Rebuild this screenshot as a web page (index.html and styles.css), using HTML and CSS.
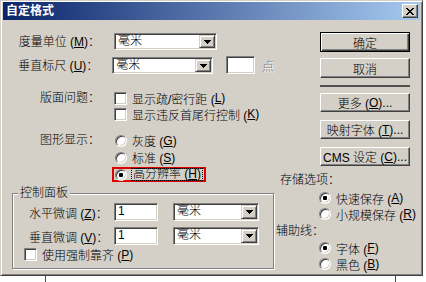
FILE: index.html
```html
<!DOCTYPE html>
<html lang="zh-CN">
<head>
    <meta charset="UTF-8">
    <meta name="viewport" content="width=device-width, initial-scale=1.0">
    <title>自定格式</title>
    <link rel="stylesheet" href="styles.css">
</head>
<body>
    <div class="window">
        <!-- 标题栏 -->
        <div class="caption">
            <span class="caption-title">自定格式</span>
            <span class="caption-close">
                <svg width="8" height="7" viewBox="0 0 8 7" shape-rendering="crispEdges"><path d="M0 0h2v1H0zM6 0h2v1H6zM1 1h2v1H1zM5 1h2v1H5zM2 2h4v1H2zM3 3h2v1H3zM2 4h4v1H2zM1 5h2v1H1zM5 5h2v1H5zM0 6h2v1H0zM6 6h2v1H6z" fill="#000"/></svg>
            </span>
        </div>
        <div class="content">
            <div class="left">
                <div class="field-row">
                    <span class="label">度量单位 (<u>M</u>)：</span>
                    <div class="select"><span class="select-text">毫米</span><span class="drop"><svg width="7" height="4" viewBox="0 0 7 4" shape-rendering="crispEdges"><path d="M0 0h7v1H0zM1 1h5v1H1zM2 2h3v1H2zM3 3h1v1H3z" fill="#000"/></svg></span></div>
                </div>
                <div class="field-row gap7">
                    <span class="label">垂直标尺 (<u>U</u>)：</span>
                    <div class="select"><span class="select-text">毫米</span><span class="drop"><svg width="7" height="4" viewBox="0 0 7 4" shape-rendering="crispEdges"><path d="M0 0h7v1H0zM1 1h5v1H1zM2 2h3v1H2zM3 3h1v1H3z" fill="#000"/></svg></span></div>
                    <div class="textbox small"></div>
                    <span class="disabled">点</span>
                </div>
                <div class="field-row top gap16">
                    <span class="label">版面问题：</span>
                    <div class="options">
                        <div class="check-row"><span class="check"></span>显示疏/密行距 (<u>L</u>)</div>
                        <div class="check-row"><span class="check"></span>显示违反首尾行控制 (<u>K</u>)</div>
                    </div>
                </div>
                <div class="field-row top gap10">
                    <span class="label label-tall">图形显示：</span>
                    <div class="options">
                        <div class="radio-row"><span class="radio"></span>灰度 (<u>G</u>)</div>
                        <div class="radio-row"><span class="radio"></span>标准 (<u>S</u>)</div>
                        <div class="radio-row"><span class="marked"><span class="radio on"></span><span class="focus">高分辨率 (<u>H</u>)</span></span></div>
                    </div>
                </div>
                <!-- 控制面板 -->
                <div class="group">
                    <span class="group-title">控制面板</span>
                    <div class="group-row first">
                        <span class="group-label">水平微调 (<u>Z</u>)：</span>
                        <div class="textbox num">1</div>
                        <div class="select unit"><span class="select-text">毫米</span><span class="drop"><svg width="7" height="4" viewBox="0 0 7 4" shape-rendering="crispEdges"><path d="M0 0h7v1H0zM1 1h5v1H1zM2 2h3v1H2zM3 3h1v1H3z" fill="#000"/></svg></span></div>
                    </div>
                    <div class="group-row">
                        <span class="group-label">垂直微调 (<u>V</u>)：</span>
                        <div class="textbox num">1</div>
                        <div class="select unit"><span class="select-text">毫米</span><span class="drop"><svg width="7" height="4" viewBox="0 0 7 4" shape-rendering="crispEdges"><path d="M0 0h7v1H0zM1 1h5v1H1zM2 2h3v1H2zM3 3h1v1H3z" fill="#000"/></svg></span></div>
                    </div>
                    <div class="snap-row"><span class="check"></span>使用强制靠齐 (<u>P</u>)</div>
                </div>
            </div>
            <div class="right">
                <div class="btn default">确定</div>
                <div class="btn gap6">取消</div>
                <div class="sep"></div>
                <div class="btn small-btn gap6">更多 (<u>O</u>)...</div>
                <div class="btn small-btn gap8">映射字体 (<u>T</u>)...</div>
                <div class="btn small-btn gap8">CMS 设定 (<u>C</u>)...</div>
                <div class="side-title save-title">存储选项：</div>
                <div class="side-options">
                    <div class="radio-row"><span class="radio on"></span>快速保存 (<u>A</u>)</div>
                    <div class="radio-row"><span class="radio"></span>小规模保存 (<u>R</u>)</div>
                </div>
                <div class="side-title guide-title">辅助线：</div>
                <div class="side-options">
                    <div class="radio-row"><span class="radio on"></span>字体 (<u>F</u>)</div>
                    <div class="radio-row"><span class="radio"></span>黑色 (<u>B</u>)</div>
                </div>
            </div>
        </div>
    </div>
    <div class="desk"></div>
</body>
</html>
```

FILE: styles.css
```css
* {
    box-sizing: border-box;
}
body {
    margin: 0;
    background: #fff;
    font-family: "Liberation Sans", "Noto Sans CJK SC", sans-serif;
    font-size: 12px;
    font-weight: 300;
    color: #000;
}
u {
    text-decoration: underline;
}
/* 窗口外框 */
.window {
    width: 423px;
    height: 276px;
    background: #d4d0c8;
    border: 1px solid;
    border-color: #d4d0c8 #404040 #404040 #d4d0c8;
    box-shadow: inset 1px 1px #fff, inset -1px -1px #808080;
    padding: 1px 2px 2px 2px;
    display: flex;
    flex-direction: column;
}
/* 标题栏 */
.caption {
    height: 18px;
    flex: none;
    display: flex;
    align-items: center;
    justify-content: space-between;
    padding: 0 2px 0 3px;
    background: linear-gradient(to right, #0a246a, #a6caf0);
}
.caption-title {
    color: #fff;
    font-weight: bold;
    line-height: 14px;
}
.caption-close {
    width: 16px;
    height: 14px;
    display: flex;
    align-items: center;
    justify-content: center;
    background: #d4d0c8;
    border: 1px solid;
    border-color: #fff #404040 #404040 #fff;
    box-shadow: inset -1px -1px #808080;
    padding-right: 1px;
}
.content {
    flex: 1;
    display: flex;
}
/* 左侧 */
.left {
    width: 262px;
    margin-left: 9px;
    padding-top: 13px;
    display: flex;
    flex-direction: column;
}
.field-row {
    display: flex;
    align-items: center;
    height: 17px;
}
.field-row.top {
    align-items: flex-start;
    height: auto;
}
.gap7 { margin-top: 7px; }
.gap16 { margin-top: 16px; }
.gap10 { margin-top: 10px; }
.gap6 { margin-top: 6px; }
.gap8 { margin-top: 8px; }
.label {
    width: 88px;
    margin-right: 14px;
    text-align: right;
    white-space: nowrap;
    line-height: 16px;
}
.label-tall {
    line-height: 17px;
}
/* 下拉框和文本框 */
.select,
.textbox {
    height: 17px;
    background: #fff;
    border: 1px solid;
    border-color: #808080 #fff #fff #808080;
    box-shadow: inset 1px 1px #404040, inset -1px -1px #d4d0c8;
}
.select {
    width: 103px;
    display: flex;
    padding: 1px;
}
.select-text {
    flex: 1;
    padding-left: 2px;
    line-height: 13px;
}
.drop {
    width: 16px;
    display: flex;
    align-items: center;
    justify-content: center;
    background: #d4d0c8;
    border: 1px solid;
    border-color: #d4d0c8 #404040 #404040 #d4d0c8;
    box-shadow: inset 1px 1px #fff, inset -1px -1px #808080;
}
.textbox {
    padding: 0 3px;
    line-height: 15px;
}
.textbox.small {
    width: 29px;
    height: 18px;
    margin-left: 13px;
    margin-top: -2px;
}
.disabled {
    margin-left: 7px;
    color: #808080;
    text-shadow: 1px 1px #fff;
}
/* 复选框和单选框 */
.options {
    display: flex;
    flex-direction: column;
}
.check-row {
    display: flex;
    align-items: center;
    height: 16px;
    white-space: nowrap;
}
.radio-row {
    display: flex;
    align-items: center;
    height: 17px;
    white-space: nowrap;
}
.check {
    width: 13px;
    height: 13px;
    flex: none;
    background: #fff;
    border: 1px solid;
    border-color: #808080 #fff #fff #808080;
    box-shadow: inset 1px 1px #404040, inset -1px -1px #d4d0c8;
    margin-right: 5px;
}
.radio {
    width: 12px;
    height: 12px;
    flex: none;
    border-radius: 50%;
    background: #fff;
    border: 1px solid;
    border-color: #808080 #fff #fff #808080;
    box-shadow: inset 1px 1px #404040, inset -1px -1px #d4d0c8;
    margin: 0 5px 0 1px;
    display: flex;
    align-items: center;
    justify-content: center;
}
.radio.on::after {
    content: "";
    width: 4px;
    height: 4px;
    border-radius: 1px;
    background: #000;
}
/* 红框标记 */
.marked {
    display: flex;
    align-items: center;
    height: 15px;
    margin-left: -2px;
    padding-right: 1px;
    border: 2px solid #e00000;
}
.focus {
    line-height: 11px;
    border: 1px dotted #000;
    padding: 0 1px;
    margin-left: -1px;
}
/* 控制面板分组 */
.group {
    width: 262px;
    height: 76px;
    margin-top: 10px;
    border: 1px solid #808080;
    box-shadow: 1px 1px 0 #fff, inset 1px 1px 0 #fff;
    display: flex;
    flex-direction: column;
}
.group-title {
    align-self: flex-start;
    margin: -8px 0 0 5px;
    padding: 0 2px;
    background: #d4d0c8;
    line-height: 14px;
}
.group-row {
    display: flex;
    align-items: center;
    height: 18px;
    padding-left: 16px;
    margin-top: 6px;
}
.group-row.first {
    margin-top: 3px;
}
.group-label {
    width: 75px;
    margin-right: 10px;
    white-space: nowrap;
}
.textbox.num {
    width: 44px;
    height: 18px;
    margin-right: 15px;
}
.select.unit {
    width: 86px;
    height: 18px;
}
.snap-row {
    display: flex;
    align-items: center;
    height: 13px;
    margin-top: 3px;
    padding-left: 11px;
}
/* 右侧按钮 */
.right {
    flex: 1;
    padding: 12px 0 0 2px;
    display: flex;
    flex-direction: column;
}
.btn {
    width: 90px;
    height: 20px;
    margin-left: 44px;
    display: flex;
    align-items: center;
    justify-content: center;
    white-space: nowrap;
    background: #d4d0c8;
    border: 1px solid;
    border-color: #fff #404040 #404040 #fff;
    box-shadow: inset -1px -1px #808080;
}
.btn.default {
    border-color: #000;
    box-shadow: inset 1px 1px #fff, inset -1px -1px #404040, inset -2px -2px #808080;
}
.btn.small-btn {
    height: 19px;
}
.sep {
    width: 90px;
    height: 2px;
    margin: 7px 0 0 44px;
    background: #505050;
}
.side-title {
    line-height: 14px;
}
.save-title {
    margin: 7px 0 0 4px;
}
.guide-title {
    margin-top: 2px;
}
.side-options {
    display: flex;
    flex-direction: column;
    padding-left: 42px;
}
.side-options .radio-row {
    height: 16px;
}
.save-title + .side-options {
    margin-top: 3px;
}
.guide-title + .side-options {
    margin-top: 2px;
}
/* 窗口下方 */
.desk {
    height: 6px;
    background: linear-gradient(to right, transparent 45px, #404860 45px, #404860 46px, transparent 46px, transparent 395px, #404860 395px, #404860 396px, transparent 396px);
}
```
